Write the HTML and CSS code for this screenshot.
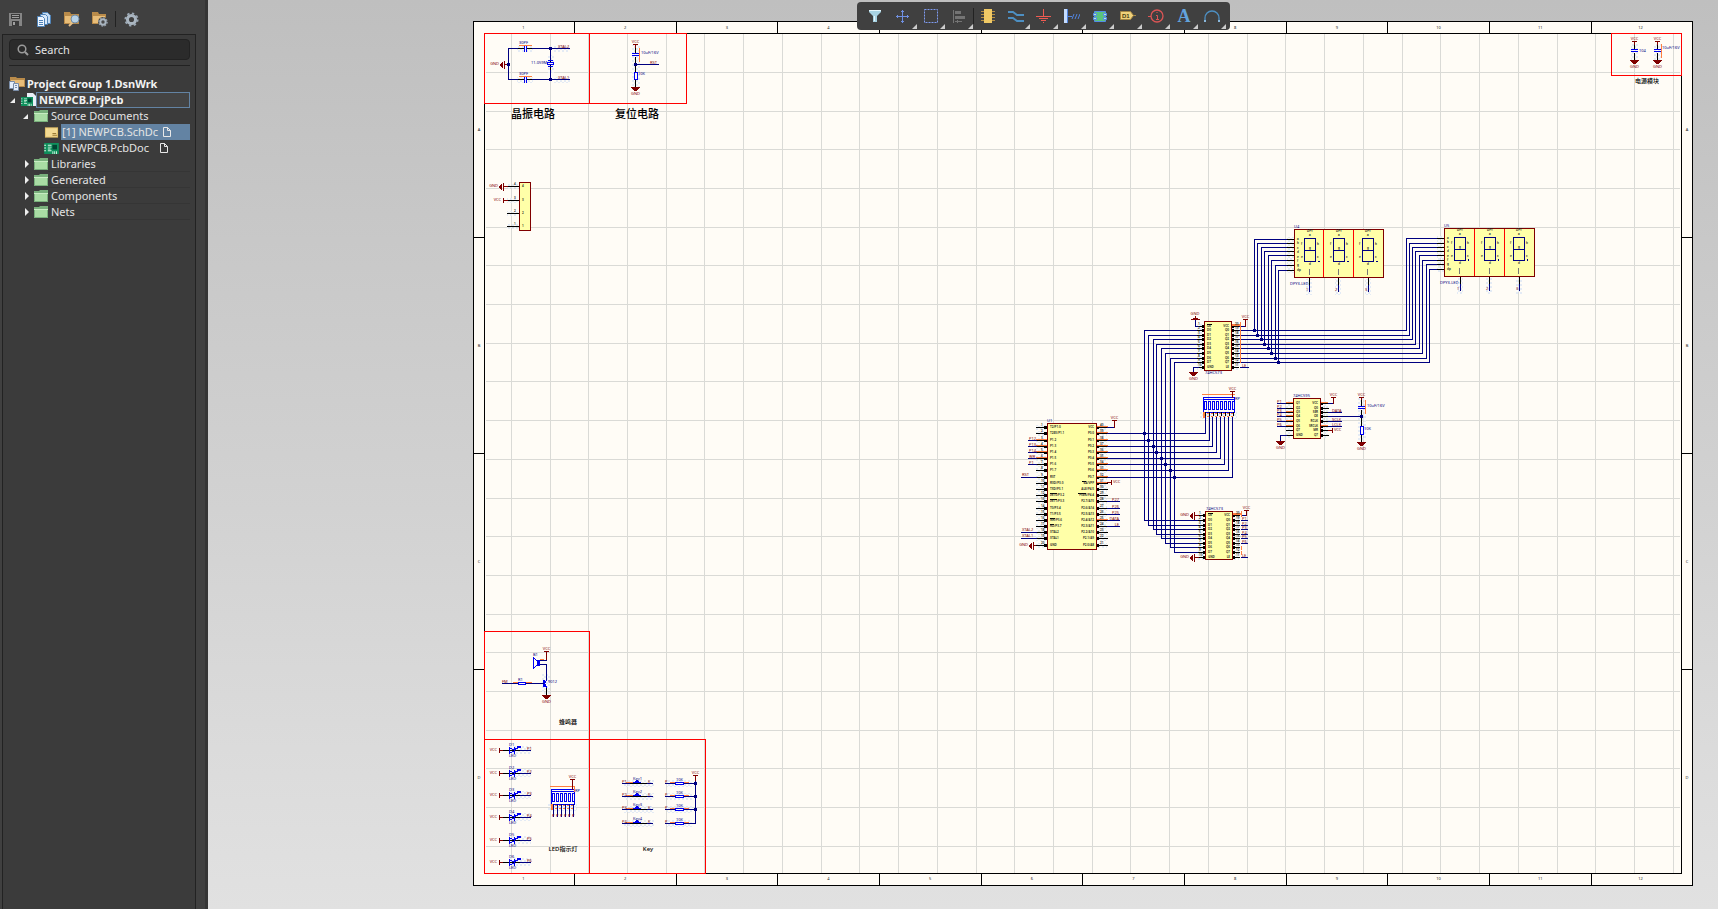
FILE: index.html
```
<!DOCTYPE html>
<html lang="en">
	<head>
		<meta charset="utf-8">
		<title>NEWPCB.PrjPcb</title>
		<link rel="stylesheet" href="styles.css">
	</head>
	<body>
		<svg class="defs" width="0" height="0">
			<defs>
				<symbol id="folder" viewBox="0 0 14 12">
					<path fill="#79b07c" d="M0 1h5l1-1h8v12H0z"/>
					<path fill="#a9dca4" d="M1 4h12v7H1z"/>
					<path fill="#c8ecc2" d="M0 3h14v1H0z"/>
				</symbol>
				<symbol id="page" viewBox="0 0 10 12">
					<path fill="none" stroke="#e8e8e8" d="M1.500 1.500h4l3 3v6h-7zM5.500 1.500v3h3"/>
				</symbol>
				<symbol id="pcb" viewBox="0 0 16 12">
					<path fill="#0f8f5c" d="M0 0h16v12H0z"/>
					<path fill="#d8f5e4" d="M0 2h2v1H0zM0 5h2v1H0zM0 8h2v1H0zM4 2h4v1H4zM4 4h4v1H4zM4 6h3v1H4zM4 8h4v1H4zM9 9h1v3H9zM11 9h1v3h-1zM13 9h1v3h-1z"/>
					<path fill="#043" d="M9 2h5v5H9z"/>
				</symbol>
				<symbol id="cog" viewBox="0 0 14 14">
					<circle cx="7" cy="7" r="5.800" fill="none" stroke="#9aa7b3" stroke-width="1.600" stroke-dasharray="2.200 2.300"/>
					<circle cx="7" cy="7" r="3.800" fill="none" stroke="#a9b5c0" stroke-width="2.800"/>
				</symbol>
			</defs>
		</svg>
		<div class="app">
			<aside class="sidebar">
				<div class="tools">
					<button type="button" aria-label="Save"><svg width="16" height="16" viewBox="0 0 16 16"><path fill="#858585" d="M1 2h13v13H1z"/><path fill="#3b3b3b" d="M3 3h9v5H3zM4 10h7v5H4z"/><path fill="#a0a0a0" d="M4 4h7v1H4zM4 6h7v1H4zM5 11h2v3H5z"/></svg></button>
					<button type="button" aria-label="Compile"><svg width="16" height="16" viewBox="0 0 16 16"><path fill="#c5dcf2" stroke="#4f83b8" d="M6.500 1.500h5l3 3v8h-8z"/><path fill="#d7e8f8" stroke="#4f83b8" d="M4.500 3.500h5l2 2v8h-7z"/><path fill="#eef6ff" stroke="#4f83b8" d="M1.500 5.500h5l2 2v8h-7zM3 9.500h4M3 11.500h4M3 13.500h4"/></svg></button>
					<button type="button" aria-label="Explore project"><svg width="18" height="16" viewBox="0 0 18 16"><path fill="#b98b4a" d="M1 1h6l1 2h8v10H1z"/><path fill="#e8bd78" d="M2 5h13v7H2z"/><path stroke="#e5c08a" stroke-width="2" d="M10 11l-4 4"/><circle cx="12" cy="8" r="4" fill="#b7d2e8" stroke="#718ba3"/></svg></button>
					<button type="button" aria-label="Project options"><svg width="18" height="16" viewBox="0 0 18 16"><path fill="#b98b4a" d="M1 1h6l1 2h7v10H1z"/><path fill="#e8bd78" d="M2 5h12v7H2z"/><circle cx="12" cy="11" r="5" fill="#4a4a4a"/><use href="#cog" x="7" y="6" width="10" height="10"/></svg></button>
					<span class="rule"></span>
					<button type="button" aria-label="Settings"><svg width="15" height="15"><use href="#cog"/></svg></button>
				</div>
				<div class="panel">
					<label class="search">
						<svg width="12" height="12" viewBox="0 0 12 12"><circle cx="5" cy="5" r="3.800" fill="none" stroke="#9b9b9b" stroke-width="1.500"/><path stroke="#9b9b9b" stroke-width="2" d="M8 8l3 3"/></svg>
						<input type="text" placeholder="Search" aria-label="Search">
					</label>
					<ul class="tree">
						<li class="group"><svg width="16" height="14" viewBox="0 0 16 14"><path fill="#b98b4a" d="M1 0h6l1 1h8v9H1z"/><path fill="#e8bd78" d="M2 3h13v6H2z"/><path fill="#e4eefa" stroke="#7a8da8" d="M.5 4.500h5v7h-5z"/><path fill="#e4eefa" stroke="#7a8da8" d="M4.500 6.500h5v7h-5zM6 8.500h2M6 10.500h2"/></svg><a href="#">Project Group 1.DsnWrk</a></li>
						<li class="project"><i class="open"></i><svg width="15" height="14" viewBox="0 0 15 14"><path fill="#e9eff7" d="M6 0h6l3 3v10H6z"/><use href="#pcb" y="4" width="12" height="9"/></svg><a href="#">NEWPCB.PrjPcb</a></li>
						<li class="branch"><i class="open"></i><svg width="14" height="12"><use href="#folder"/></svg><a href="#">Source Documents</a></li>
						<li class="doc selected"><svg width="15" height="12" viewBox="0 0 16 12"><path fill="#e0bd66" d="M1 1h14v11H1z"/><path fill="#f3da93" d="M2 2h12v9H2z"/><path fill="#9a7a35" d="M9 7h4v1H9zM9 9h5v1H9z"/></svg><a href="#">[1] NEWPCB.SchDc</a><svg class="state" width="10" height="12"><use href="#page"/></svg></li>
						<li class="doc"><svg width="15" height="11"><use href="#pcb"/></svg><a href="#">NEWPCB.PcbDoc</a><svg class="state" width="10" height="12"><use href="#page"/></svg></li>
						<li class="branch lined"><i></i><svg width="14" height="12"><use href="#folder"/></svg><a href="#">Libraries</a></li>
						<li class="branch lined"><i></i><svg width="14" height="12"><use href="#folder"/></svg><a href="#">Generated</a></li>
						<li class="branch lined"><i></i><svg width="14" height="12"><use href="#folder"/></svg><a href="#">Components</a></li>
						<li class="branch lined"><i></i><svg width="14" height="12"><use href="#folder"/></svg><a href="#">Nets</a></li>
					</ul>
				</div>
			</aside>
			<main class="editor">
				<svg id="sheet" class="sheet" viewBox="208 0 1510 909" role="img" aria-label="Schematic sheet"></svg>
				<div class="activebar">
					<button type="button" aria-label="Filter"><svg width="16" height="16" viewBox="0 0 16 16"><path fill="#a8d3e3" d="M2 2h12v2l-4 4v6H6V8L2 4z"/><path fill="#e6f7fc" d="M2 2h12v1H2zM7 8h1v5H7z"/></svg></button>
					<button type="button" class="more" aria-label="Move"><svg width="16" height="16" viewBox="0 0 16 16"><path fill="none" stroke="#6f8fe0" d="M7.500 2v13M1 8.500h13M6 3.500h3M6 13.500h3M2.500 7v3M12.500 7v3"/></svg></button>
					<button type="button" class="more" aria-label="Select"><svg width="16" height="16" viewBox="0 0 16 16"><path fill="none" stroke="#7f9bf0" stroke-dasharray="2 1" d="M1.500 1.500h13v13h-13z"/></svg></button>
					<button type="button" class="more" aria-label="Align"><svg width="16" height="16" viewBox="0 0 16 16"><path fill="#747474" d="M2 2h1v13H2zM4 3h6v3H4zM4 8h10v3H4zM4 13h2v-1h1v1h4v1H7v1H6v-1H4z"/></svg></button>
					<span class="rule"></span>
					<button type="button" aria-label="Place part"><svg width="16" height="16" viewBox="0 0 16 16"><path stroke="#b58f42" d="M1 3.500h14M1 6.500h14M1 9.500h14M1 12.500h14"/><path fill="#f0c965" d="M4 1h8v14H4z"/></svg></button>
					<button type="button" class="more" aria-label="Place wire"><svg width="16" height="16" viewBox="0 0 16 16"><path fill="none" stroke="#4d8fc2" stroke-width="2" d="M0 4h5l4 3h7M0 10h5l4 3h7"/></svg></button>
					<button type="button" class="more" aria-label="Place power port"><svg width="16" height="16" viewBox="0 0 16 16"><path stroke="#ee5b52" d="M7.500 1v8M0 8.500h15M3 10.500h9M5 12.500h5M7 14.500h1"/></svg></button>
					<button type="button" class="more" aria-label="Place harness"><svg width="16" height="16" viewBox="0 0 16 16"><path fill="#c4dcff" d="M0 1h3v14H0z"/><path fill="#5184df" d="M3 1h1v14H3z"/><path fill="none" stroke="#5184df" d="M4 8.500h4M8 11l2-5M11 11l2-5M14 11l2-5"/></svg></button>
					<button type="button" class="more" aria-label="Place sheet symbol"><svg width="16" height="16" viewBox="0 0 16 16"><path fill="#5bc27d" stroke="#538ce8" d="M2.500 3.500h11v10h-11z"/><path fill="#bfe6cb" stroke="#538ce8" d="M1.500 5.500h3v2h-3zM1.500 9.500h3v2h-3zM11.500 5.500h3v2h-3zM11.500 9.500h3v2h-3z"/></svg></button>
					<button type="button" class="more" aria-label="Place port"><svg width="18" height="16" viewBox="0 0 18 16"><path fill="#efd17a" stroke="#a38543" d="M1.500 3.500h10l3 4-3 4h-10zM14 7.500h3"/><text class="port" x="3" y="10">D1</text></svg></button>
					<button type="button" class="more" aria-label="Place directive"><svg width="16" height="16" viewBox="0 0 16 16"><circle cx="9" cy="8" r="6" fill="none" stroke="#dc5555" stroke-width="1.300"/><path fill="none" stroke="#dc5555" d="M0 8.500h3M8 7.500h1.500v4M8 11.500h3M8.500 4.500h1"/></svg></button>
					<button type="button" class="more letter" aria-label="Place text">A</button>
					<button type="button" class="more" aria-label="Place arc"><svg width="16" height="16" viewBox="0 0 16 16"><path fill="none" stroke="#4d8fc2" stroke-width="1.300" d="M1 13V10a7 7 0 0 1 14 0v3"/><path fill="#8ab8dd" d="M0 12h2v2H0zM14 12h2v2h-2z"/></svg></button>
				</div>
			</main>
		</div>
		<script src="sheet.js"></script>
	</body>
</html>
```
FILE: styles.css
```
* {
	box-sizing: border-box;
}
body {
	margin: 0;
	font-family: "Noto Sans", "Noto Sans CJK SC", sans-serif;
	font-size: 11px;
	color: #e3e3e3;
	background-color: #3b3b3b;
}
button {
	border: 0;
	padding: 0;
	background: none;
	display: flex;
	align-items: center;
	justify-content: center;
}
.defs {
	position: absolute;
}
.app {
	display: flex;
	height: 100vh;
}
.sidebar {
	width: 208px;
	flex: none;
	display: flex;
	flex-direction: column;
	padding: 0 9px 0 2px;
	background-color: #404040;
	border-right: 3px solid #353535;
}
.tools {
	display: flex;
	align-items: center;
	height: 34px;
	padding: 4px 0 0 5px;
	gap: 10px;
}
.tools button {
	width: 18px;
	height: 18px;
}
.tools .rule {
	width: 1px;
	height: 16px;
	margin: 0 -4px;
	background-color: #222;
}
.panel {
	flex: 1;
	border: 1px solid #222;
	border-bottom: 0;
	padding: 4px 5px 0 6px;
	background-color: #3b3b3b;
}
.search {
	display: flex;
	align-items: center;
	gap: 4px;
	height: 21px;
	padding-left: 7px;
	border: 1px solid #222;
	border-radius: 4px;
	background-color: #2b2b2b;
}
.search svg {
	flex: none;
}
.search input {
	width: 100%;
	border: 0;
	outline: 0;
	background: none;
	font: inherit;
	color: #e3e3e3;
}
.search input::placeholder {
	color: #e3e3e3;
}
.tree {
	list-style: none;
	margin: 5px 0 0;
	padding: 10px 0 0;
	border-top: 1px solid #222;
}
.tree li {
	display: flex;
	align-items: center;
	height: 16px;
}
.tree svg {
	flex: none;
}
.tree a {
	flex: 1;
	height: 16px;
	line-height: 15px;
	padding-left: 2px;
	color: inherit;
	text-decoration: none;
	white-space: nowrap;
}
.tree i {
	width: 0;
	height: 0;
	margin: 0 5px 0 2px;
	border-left: 4px solid #eee;
	border-top: 4px solid transparent;
	border-bottom: 4px solid transparent;
}
.tree i.open {
	margin: 0 6px 0 0;
	border-left: 5px solid transparent;
	border-top: 0;
	border-bottom: 5px solid #eee;
}
.group, .project {
	font-weight: bold;
	color: #f2f2f2;
}
.tree .project {
	padding-left: 1px;
}
.project a {
	border: 1px solid #6383a3;
	background-color: #444;
	line-height: 13px;
}
.tree .branch {
	padding-left: 14px;
}
.tree .branch a {
	padding-left: 3px;
}
.tree .doc {
	padding-left: 35px;
}
.doc svg:first-child {
	margin-right: 1px;
}
.doc a {
	flex: 0 0 95px;
}
.doc .state {
	margin-left: 4px;
}
.selected {
	background: linear-gradient(#6383a3, #6383a3) 52px 0 no-repeat;
}
.lined a {
	border-bottom: 1px solid #353535;
}
.editor {
	position: relative;
	flex: 1;
	min-width: 0;
	background-image: linear-gradient(#bfbfbf, #e1e1e1);
}
.sheet {
	display: block;
	width: 100%;
	height: 100%;
	font-family: "Noto Sans", "Noto Sans CJK SC", sans-serif;
}
.activebar {
	position: absolute;
	left: 649px;
	top: 2px;
	display: flex;
	align-items: center;
	height: 28px;
	padding: 0 4px;
	border-radius: 4px;
	background-color: #404040;
}
.activebar button {
	position: relative;
	width: 28px;
	height: 28px;
}
.activebar .rule {
	width: 1px;
	height: 16px;
	background-color: #222;
}
.more::after {
	content: "";
	position: absolute;
	right: 0;
	bottom: 1px;
	border-left: 5px solid transparent;
	border-bottom: 5px solid #ccc;
}
.letter {
	font: bold 18px "Liberation Serif", serif;
	color: #62a3dc;
}
.port {
	font: bold 6px "Liberation Sans", sans-serif;
	fill: #4a3a10;
}
.lines {
	shape-rendering: crispEdges;
}
.note {
	fill: #000;
	text-anchor: middle;
	font-weight: 500;
}
.big {
	font-size: 11px;
}
.small {
	font-size: 6px;
}
.tiny {
	font-size: 3px;
	font-weight: 600;
}
.net {
	font-size: 4px;
	font-weight: 400;
}
.zone {
	font-size: 4px;
	fill: #222;
	text-anchor: middle;
}
```
FILE: sheet.js
```
var NAVY = '#000080', BLUE = '#0000f0', MAROON = '#800000', ORANGE = '#ff7f3f', BLACK = '#000', RED = '#f00';
var INK = '#222';
var sheet = document.getElementById('sheet');
var halos = '', lines = '', texts = '';

function px(v) {
	return Math.floor(v) + 0.5;
}
function line(color, pts) {
	var p = pts.map(px);
	lines += '<polyline fill="none" stroke="' + color + '" stroke-linecap="square" points="' + p.join(' ') + '"/>';
}
function box(stroke, fill, x1, y1, x2, y2) {
	lines += '<rect stroke="' + stroke + '" fill="' + fill + '" x="' + px(x1) + '" y="' + px(y1) +
		'" width="' + Math.round(x2 - x1) + '" height="' + Math.round(y2 - y1) + '"/>';
}
function fill(color, x, y, w, h) {
	lines += '<rect fill="' + color + '" x="' + Math.floor(x) + '" y="' + Math.floor(y) + '" width="' + w + '" height="' + h + '"/>';
}
function shape(color, d) {
	lines += '<path fill="' + color + '" d="' + d + '"/>';
}
function text(color, x, y, str, anchor) {
	texts += '<text class="tiny' + (color == INK ? '' : ' net') + '" fill="' + color + '" x="' + x + '" y="' + (y + 1) + '" text-anchor="' + (anchor || 'start') + '">' + str + '</text>';
}
function note(size, x, y, str) {
	texts += '<text class="note ' + size + '" x="' + x + '" y="' + y + '">' + str + '</text>';
}
// checkered glow behind pins
function halo(x1, y1, x2, y2) {
	halos += '<rect fill="url(#dots)" x="' + x1 + '" y="' + y1 + '" width="' + (x2 - x1) + '" height="' + (y2 - y1) + '"/>';
}
function dot(x, y) {
	fill(NAVY, x - 1, y - 1, 3, 3);
}

function vcc(x, y, len) {
	text(MAROON, x + 0.5, y - 2, 'VCC', 'middle');
	line(MAROON, [x - 2, y, x + 2, y]);
	line(MAROON, [x, y, x, y + len]);
}
function vccSide(x, y, dir) {
	line(MAROON, [x, y - 2, x, y + 2]);
	line(MAROON, [x, y, x - dir * 4, y]);
	text(MAROON, x + dir * 2, y, 'VCC', dir < 0 ? 'end' : 'start');
}
function gnd(x, y) {
	x = Math.floor(x); y = Math.floor(y);
	fill(MAROON, x - 4, y, 9, 1);
	fill(MAROON, x - 3, y + 1, 7, 1);
	fill(MAROON, x - 2, y + 2, 5, 1);
	fill(MAROON, x - 1, y + 3, 3, 1);
	text(MAROON, x + 0.5, y + 7, 'GND', 'middle');
}
function gndLeft(x, y) {
	x = Math.floor(x); y = Math.floor(y);
	fill(MAROON, x, y - 3, 1, 8);
	fill(MAROON, x - 2, y - 2, 1, 6);
	fill(MAROON, x - 3, y - 1, 2, 4);
	fill(MAROON, x - 4, y, 1, 2);
	text(MAROON, x - 5, y, 'GND', 'end');
	line(MAROON, [x, y, x + 4, y]);
}
function capV(x, y) {
	fill('#fffcf6', x, y, 1, 3);
	fill(BLUE, x - 3, y - 1, 7, 1);
	fill(BLUE, x - 3, y + 1, 7, 1);
}
function resV(x, y, h) {
	box(BLUE, '#fffcf6', x - 1, y, x + 2, y + h);
}
function pin(x1, x2, y, color) {
	line(color || BLACK, [x1, y, x2, y]);
	halo(Math.min(x1, x2), Math.floor(y) - 2, Math.max(x1, x2), Math.floor(y) + 3);
}

function frame() {
	var i, x, y;
	fill('#fffcf6', 473, 21, 1220, 864);
	for (i = 0; i <= 30; i++) {
		x = 511.3 + i * 38.73;
		line('#dadad6', [x, 34, x, 872]);
	}
	for (i = 0; i <= 20; i++) {
		y = 72.3 + i * 38.7;
		line('#dadad6', [486, y, 1679, y]);
	}
	box(BLACK, 'none', 473, 21, 1692, 885);
	box(BLACK, 'none', 484, 33, 1681, 873);
	for (i = 0; i < 11; i++) {
		x = 574.5 + i * 101.67;
		line(BLACK, [x, 21, x, 33]);
		line(BLACK, [x, 873, x, 885]);
	}
	for (i = 0; i < 12; i++) {
		x = 523.5 + i * 101.67;
		if (i == 11) x = 1640.5;
		texts += '<text class="zone" x="' + x + '" y="29">' + (i + 1) + '</text>';
		texts += '<text class="zone" x="' + x + '" y="880">' + (i + 1) + '</text>';
	}
	for (i = 0; i < 4; i++) {
		y = 237 + i * 216;
		if (i < 3) {
			line(BLACK, [473, y, 484, y]);
			line(BLACK, [1681, y, 1692, y]);
		}
		texts += '<text class="zone" x="479" y="' + (y - 106) + '">' + 'ABCD'[i] + '</text>';
		texts += '<text class="zone" x="1687" y="' + (y - 106) + '">' + 'ABCD'[i] + '</text>';
	}
	box(RED, 'none', 484, 33, 589, 103);
	box(RED, 'none', 589, 33, 686, 103);
	box(RED, 'none', 1611, 33, 1681, 75);
	box(RED, 'none', 484, 631, 589, 739);
	box(RED, 'none', 484, 739, 589, 873);
	box(RED, 'none', 589, 739, 705, 873);
	note('big', 533, 118, '晶振电路');
	note('big', 637, 118, '复位电路');
	note('small', 1647, 83, '电源模块');
	note('small', 568, 724, '蜂鸣器');
	note('small', 563, 851, 'LED指示灯');
	note('small', 648, 851, 'Key');
}

function crystal() {
	[48, 79].forEach(function (y, i) {
		line(NAVY, [508, y, 569, y]);
		line(BLACK, [518, y, 523, y]);
		line(BLACK, [527, y, 531, y]);
		fill('#fffcf6', 525, y, 1, 1);
		fill(BLUE, 524, y - 3, 1, 7);
		fill(BLUE, 526, y - 3, 1, 7);
		line(ORANGE, [519, y - 3, 531, y - 3]);
		text(NAVY, 519, y - 5, '30PF');
		text(MAROON, 558, y - 1, 'XTAL' + (2 - i));
		halo(517, y - 2, 533, y + 4);
		halo(554, y - 2, 570, y + 4);
		dot(550, y);
	});
	line(NAVY, [508, 48, 508, 79]);
	line(NAVY, [550, 48, 550, 79]);
	line(BLACK, [550, 60, 550, 69]);
	box(BLUE, '#fffcf6', 547, 62, 553, 64);
	line(BLUE, [548, 60, 552, 60]);
	line(BLUE, [548, 66, 552, 66]);
	halo(548, 55, 554, 73);
	text(NAVY, 531, 63, '11.059M');
	gndLeft(504, 64);
	dot(508, 64);
}
function reset() {
	halo(632, 45, 640, 90);
	vcc(635, 44, 4);
	line(BLACK, [635, 48, 635, 87]);
	capV(635, 54);
	line(ORANGE, [639, 48, 639, 61]);
	text(NAVY, 641, 53, '10uF/16V');
	line(NAVY, [635, 64, 658, 64]);
	dot(635, 64);
	text(MAROON, 650, 63, 'RST');
	resV(635, 72, 7);
	text(NAVY, 638, 74, '10K');
	gnd(635, 87);
}
function header() {
	box(MAROON, '#ffffa8', 519, 182, 530, 230);
	[186, 200, 213, 226].forEach(function (y, i) {
		pin(507, 518, y);
		text(INK, 522, y, 4 - i);
		text(INK, 514, y - 2, 4 - i);
	});
	gndLeft(503, 186);
	vccSide(503, 200, -1);
}

var busX = [1144, 1148, 1153, 1156, 1161, 1165, 1170, 1174];
var latchY = [330, 335, 339, 344, 348, 353, 358, 362];
var latch2Y = [520, 525, 529, 534, 538, 543, 547, 552];
var netX = [1205, 1209, 1212, 1216, 1220, 1224, 1228, 1232];

function mcu() {
	var left = ['T2/P1.0', 'T2EX/P1.1', 'P1.2', 'P1.3', 'P1.4', 'P1.5', 'P1.6', 'P1.7', 'RST', 'RXD/P3.0', 'TXD/P3.1', 'INT0/P3.2', 'INT1/P3.3', 'T0/P3.4', 'T1/P3.5', 'WR/P3.6', 'RD/P3.7', 'XTAL2', 'XTAL1', 'GND'];
	var right = ['VCC', 'P0.0', 'P0.1', 'P0.2', 'P0.3', 'P0.4', 'P0.5', 'P0.6', 'P0.7', 'EA/VPP', 'ALE/P4.5', 'PSEN/P4.4', 'P2.7/A15', 'P2.6/A14', 'P2.5/A13', 'P2.4/A12', 'P2.3/A11', 'P2.2/A10', 'P2.1/A9', 'P2.0/A8'];
	var nets = { 2: 'P12', 3: 'P13', 4: 'P14', 5: 'WR', 6: 'P1' };
	box(MAROON, '#ffffa8', 1047, 423, 1096, 549);
	text(NAVY, 1047, 421, 'U1');
	for (var i = 0; i < 20; i++) {
		var y = Math.floor(427.7 + i * 6.18);
		pin(1036, 1046, y);
		pin(1097, 1107, y);
		fill(BLACK, 1044, y - 1, 3, 3);
		fill(BLACK, 1097, y - 1, 2, 3);
		if (nets[i]) {
			line(NAVY, [1028, y, 1036, y]);
			text(MAROON, 1029, y - 1, nets[i]);
		}
		if (i >= 2 && i <= 5) line(ORANGE, [1036, y - 1, 1046, y - 1]);
		if (i < 10 || i == 15) line(ORANGE, [1097, y - 1, 1107, y - 1]);
		if (i == 8 || i == 17 || i == 18) {
			line(NAVY, [1021, y, 1036, y]);
			text(MAROON, 1022, y - 2, i == 8 ? 'RST' : 'XTAL' + (19 - i));
		}
		if (i >= 12 && i <= 16) {
			line(NAVY, [1107, y, 1119, y]);
			text(MAROON, 1119, y - 1, ['P27', 'P26', 'P25', 'DATA', 'LE'][i - 12], 'end');
		}
		if (i > 0 && i < 9) {
			line(NAVY, [1107, y, netX[i - 1], y, netX[i - 1], 416]);
			dot(busX[i - 1], y);
		}
		text(INK, 1050, y, left[i]);
		text(INK, 1094, y, right[i], 'end');
		text(INK, 1041, y - 2, i + 1);
		text(INK, 1100, y - 2, 40 - i);
	}
	[[1082, 481, 4], [1078, 493, 8], [1050, 493, 7], [1050, 499, 7], [1050, 518, 5], [1050, 524, 4]].forEach(function (b) {
		fill(BLACK, b[0], b[1], b[2], 1);
	});
	line(NAVY, [1107, 427, 1114, 427]);
	vcc(1114, 420, 7);
	vccSide(1111, 482, 1);
	gndLeft(1033, 545);
	line(BLACK, [1036, 545, 1046, 545]);
}

function latch(x, y, rows, top, bottom, id) {
	box(MAROON, '#ffffa8', x, y, x + 27, y + (id == 1 ? 49 : 48));
	[top].concat(rows, [bottom]).forEach(function (py, i) {
		pin(x - 7, x - 1, py);
		pin(x + 28, x + 34, py);
		fill(BLACK, x - 2, py - 1, 2, 3);
		fill(BLACK, x + 28, py - 1, 2, 3);
		text(INK, x + 3, py, i == 0 ? 'OE' : i == 9 ? 'GND' : 'D' + (i - 1));
		text(INK, x + 25, py, i == 0 ? 'VCC' : i == 9 ? 'LE' : 'Q' + (i - 1), 'end');
		text(INK, x - 6, py - 2, i + 1);
		text(INK, x + 31, py - 2, 20 - i);
	});
	fill(BLACK, x + 3, top - 2, 5, 1);
	fill(ORANGE, x + 28, top - 2, 8, 2);
	text(NAVY, x + 1, id == 2 ? y - 2 : y + 52, '74HC573');
}
function buses() {
	var up1 = [1254, 1257, 1261, 1264, 1268, 1271, 1275, 1278];
	var up2 = [1406, 1409, 1412, 1415, 1419, 1422, 1426, 1429];
	var top1 = [239, 243, 247, 251, 255, 260, 265, 270];
	var top2 = [238, 243, 247, 251, 255, 260, 264, 269];
	for (var k = 0; k < 8; k++) {
		line(NAVY, [1197, latchY[k], busX[k], latchY[k], busX[k], latch2Y[k], 1198, latch2Y[k]]);
		line(NAVY, [1239, latchY[k], up2[k], latchY[k], up2[k], top2[k], 1437, top2[k]]);
		line(NAVY, [up1[k], latchY[k], up1[k], top1[k], 1287, top1[k]]);
		dot(up1[k], latchY[k]);
		pin(1287, 1294, top1[k]);
		pin(1437, 1444, top2[k]);
	}
}
function latches() {
	latch(1204, 321, latchY, 326, 367, 1);
	latch(1205, 511, latch2Y, 515, 557, 2);
	// first latch supply
	text(MAROON, 1195, 314, 'GND', 'middle');
	shape(MAROON, 'M1191 320h9v-1h-2v-1h-2v-2h-1v2h-2v1h-2z');
	line(NAVY, [1195, 320, 1195, 326, 1198, 326]);
	line(NAVY, [1198, 367, 1193, 367, 1193, 372]);
	gnd(1193, 372);
	line(NAVY, [1239, 326, 1245, 326]);
	vcc(1245, 319, 7);
	line(ORANGE, [1240, 322, 1240, 362]);
	line(NAVY, [1240, 367, 1248, 367]);
	text(MAROON, 1242, 366, 'LE');
	// second latch supply
	gndLeft(1194, 515);
	gndLeft(1194, 557);
	line(NAVY, [1241, 515, 1246, 515]);
	vcc(1246, 510, 5);
	line(ORANGE, [1241, 511, 1241, 516]);
	latch2Y.concat([557]).forEach(function (y, i) {
		if (i < 6 || i == 8) {
			line(NAVY, [1241, y, 1247, y]);
			text(MAROON, 1242, y - 1, i == 8 ? 'LE' : 'P' + (i + 1));
		} else {
			line(ORANGE, [1241, y - 1, 1241, y + 2]);
		}
	});
}

function display(x, y, name, extra) {
	box(MAROON, '#ffffa8', x, y, x + 89 + extra, y + 48);
	line(RED, [x + 29 + extra, y + 1, x + 29 + extra, y + 47]);
	line(RED, [x + 59 + extra, y + 1, x + 59 + extra, y + 47]);
	[10, 39 + extra, 68 + extra].forEach(function (dx, i) {
		box(NAVY, 'none', x + dx, y + 9, x + dx + 11, y + 32);
		line(NAVY, [x + dx, y + 21, x + dx + 11, y + 21]);
		fill(NAVY, x + dx + 14, y + 32 - extra, 2 - extra, 1 + extra);
		text(INK, x + dx + 6, y + 2, 'DPY', 'middle');
		text(INK, x + dx + 6, y + 6, 'a', 'middle');
		text(INK, x + dx + 6, y + 19, 'g', 'middle');
		text(INK, x + dx + 6, y + 35, 'd', 'middle');
		text(INK, x + dx - 3, y + 15, 'f');
		text(INK, x + dx + 13, y + 15, 'b');
		text(INK, x + dx - 3, y + 28, 'e');
		text(INK, x + dx + 13, y + 28, 'c');
		line('#777', [x + dx + 5, y + 40, x + dx + 5, y + 45]);
		var px1 = x + [15, 44, 74][i] + extra;
		line(BLACK, [px1, y + 49, px1, y + 55]);
		line(NAVY, [px1, y + 56, px1, y + 62]);
		halo(px1 - 3, y + 50, px1 + 3, y + 66);
		text(MAROON, px1 - 3, y + 61, i + 1);
	});
	'a b c d e f g dp'.split(' ').forEach(function (s, i) {
		text(INK, x + 3, y + 10 + i * 4.400, s);
	});
	text(NAVY, x - 4, y + 55, 'DPY3-LED');
	text(NAVY, x, y - 2, name);
}

function network(x, y, n) {
	var w = n * 4 - 1;
	line(ORANGE, [x - 1, y - 3, x + w, y - 3]);
	box(BLUE, 'none', x, y, x + w, y + 15);
	line(BLUE, [x, y + 2, x + w, y + 2]);
	for (var i = 0; i < n; i++) {
		box(BLUE, '#fffcf6', x + 1 + i * 4, y + 4, x + 3 + i * 4, y + 12);
		line(BLACK, [x + 2 + i * 4, y + 15, x + 2 + i * 4, y + 18]);
		fill(ORANGE, x + i * 4, y + 16, 2, 1);
		fill(ORANGE, x + i * 4, y + 19, 2, 1);
	}
	fill(ORANGE, x, y + 15, 2, 6);
	halo(x - 3, y + 15, x + w + 3, y + 22);
	text(NAVY, x + w + 1, y + 2, 'RP');
}

function driver() {
	var ys = [403, 408, 412, 416, 421, 426, 430, 435];
	box(MAROON, '#ffffa8', 1293, 398, 1320, 438);
	text(NAVY, 1293, 396, '74HC595');
	ys.forEach(function (y, i) {
		pin(1286, 1292, y);
		pin(1321, 1328, y);
		fill(BLACK, 1321, y - 1, 2, 3);
		if (i < 6) {
			line(NAVY, [1277, y, 1285, y]);
			text(MAROON, 1277, y - 1, 'P' + (i + 1));
			if (i != 1) line(ORANGE, [1286, y - 1, 1292, y - 1]);
		}
		text(INK, 1296, y, i == 7 ? 'GND' : 'Q' + (i + 1));
		text(INK, 1318, y, ['VCC', 'Q0', 'SER', 'OE', 'RCLK', 'SRCLK', 'MR', 'Q7'][i], 'end');
	});
	line(NAVY, [1286, 435, 1280, 435, 1280, 441]);
	gnd(1280, 441);
	line(ORANGE, [1321, 402, 1327, 402]);
	line(NAVY, [1328, 403, 1333, 403]);
	vcc(1333, 397, 6);
	[412, 421, 426].forEach(function (y, i) {
		line(NAVY, [1328, y, 1341, y]);
		text(MAROON, 1332, y - 1, ['DATA', 'SCLK', 'LCLK'][i]);
	});
	line(ORANGE, [1321, 425, 1327, 425]);
	line(NAVY, [1328, 416, 1361, 416]);
	vccSide(1332, 430, 1);
	halo(1358, 398, 1366, 440);
	vcc(1361, 397, 3);
	line(BLACK, [1361, 400, 1361, 442]);
	capV(1361, 407);
	line(ORANGE, [1365, 400, 1365, 413]);
	text(NAVY, 1367, 406, '10uF/16V');
	dot(1361, 416);
	resV(1361, 426, 8);
	text(NAVY, 1364, 429, '10K');
	gnd(1361, 442);
}

function power() {
	[1634, 1657].forEach(function (x, i) {
		halo(x - 3, 44, x + 4, 62);
		vcc(x, 41, 4);
		line(BLACK, [x, 45, x, 60]);
		capV(x, 50);
		gnd(x, 60);
		text(NAVY, x + 5, i ? 48 : 51, i ? '10uF/16V' : '104');
	});
	line(ORANGE, [1661, 44, 1661, 57]);
}

function buzzer() {
	vcc(546, 651, 9);
	line(NAVY, [540, 660, 546, 660]);
	line(ORANGE, [540, 659, 543, 659]);
	line(BLUE, [533, 657, 537, 661, 537, 664, 533, 668, 533, 657]);
	fill(BLUE, 537, 660, 3, 6);
	line(NAVY, [540, 664, 546, 664, 546, 680]);
	line(BLACK, [546, 686, 546, 695]);
	fill(BLUE, 543, 680, 2, 7);
	line(BLUE, [544, 683, 546, 680]);
	line(BLUE, [544, 683, 546, 687]);
	line(NAVY, [502, 683, 543, 683]);
	line(ORANGE, [513, 682, 531, 682]);
	box(BLUE, '#fffcf6', 518, 682, 525, 684);
	gnd(546, 695);
	halo(542, 674, 550, 694);
	text(NAVY, 533, 655, 'B1');
	text(NAVY, 518, 680, 'R1');
	text(NAVY, 548, 682, '9012');
	text(MAROON, 502, 682, 'FM');
}

function leds() {
	[750, 773, 795, 817, 840, 862].forEach(function (y, i) {
		vccSide(499, y, -1);
		line(BLACK, [503, y, 521, y]);
		line(NAVY, [520, y, 530, y]);
		line(BLUE, [509, y - 3, 509, y + 3, 514, y, 509, y - 3]);
		line(BLUE, [514, y - 3, 514, y + 3]);
		line(BLUE, [515, y - 1, 519, y - 4]);
		fill(BLUE, 517, y - 4, 4, 2);
		fill(BLUE, 515, y - 2, 3, 1);
		halo(509, y - 4, 531, y + 4);
		text(NAVY, 509, y - 5, 'D' + (i + 1));
		text(NAVY, 509, y + 6, 'LED');
		text(MAROON, 527, y - 1, 'P' + (i + 1));
	});
	network(551, 789, 6);
	for (var i = 0; i < 6; i++) {
		line(NAVY, [553 + i * 4, 804, 553 + i * 4, 816]);
		text(MAROON, 552 + i * 4, 816, 'P');
	}
	vcc(572, 779, 10);
	line(ORANGE, [574, 786, 574, 791]);
}

function keys() {
	[783, 796, 809, 823].forEach(function (y, i) {
		line(NAVY, [622, y, 652, y]);
		line(BLACK, [630, y, 646, y]);
		line(ORANGE, [626, y - 1, 632, y - 1]);
		fill(BLUE, 633, y - 1, 8, 1);
		fill(BLUE, 635, y - 2, 4, 1);
		fill(BLUE, 636, y - 3, 2, 1);
		halo(624, y - 3, 654, y + 4);
		text(NAVY, 633, y - 4, 'Key' + (i + 1));
		text(MAROON, 622, y - 1, 'P' + (i + 1));
		text(MAROON, 648, y - 1, 'K');
		line(NAVY, [665, y, 695, y]);
		line(ORANGE, [670, y - 1, 688, y - 1]);
		box(BLUE, '#fffcf6', 675, y - 1, 683, y + 1);
		halo(667, y - 3, 692, y + 4);
		text(NAVY, 676, y - 3, '10K');
		text(MAROON, 665, y - 1, 'P');
		if (i < 3) dot(695, y);
	});
	line(NAVY, [695, 778, 695, 823]);
	vcc(695, 775, 5);
}

frame();
crystal();
reset();
header();
buses();
mcu();
latches();
display(1294, 229, 'U4', 0);
display(1444, 228, 'U5', 1);
network(1203, 397, 8);
vcc(1232, 391, 6);
driver();
power();
buzzer();
leds();
keys();

// the frame comes first, glow goes right above its grid
var cut = lines.indexOf('<polyline fill="none" stroke="' + NAVY);
sheet.innerHTML = '<defs><pattern id="dots" width="4" height="4" patternUnits="userSpaceOnUse">' +
	'<rect width="2" height="2" fill="#e4ebf5"/><rect x="2" y="2" width="2" height="2" fill="#e4ebf5"/></pattern></defs>' +
	'<g class="lines">' + lines.slice(0, cut) + halos + lines.slice(cut) + '</g><g>' + texts + '</g>';
```
